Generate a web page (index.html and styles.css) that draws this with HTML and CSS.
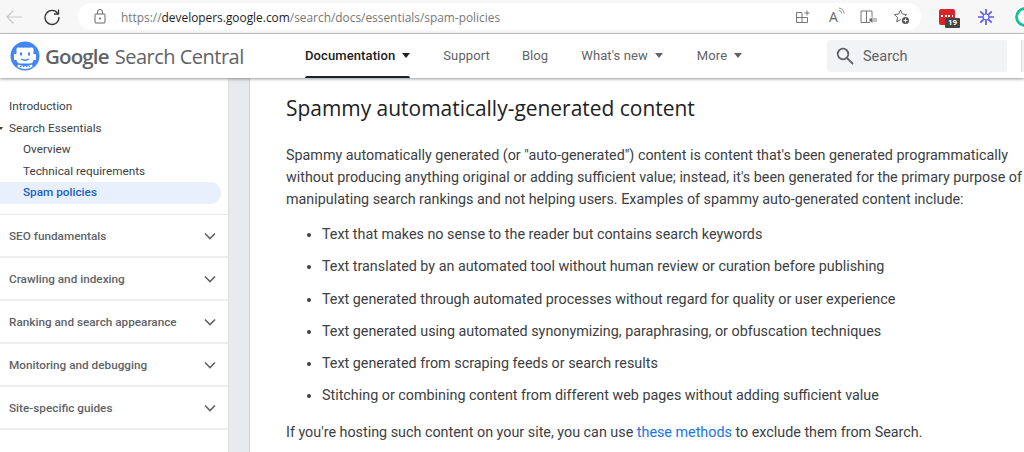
FILE: index.html
```html
<!DOCTYPE html>
<html lang="en">
<head>
<meta charset="utf-8">
<title>Spam policies</title>
<link rel="stylesheet" href="styles.css">
</head>
<body>
<div class="chrome">
  <svg class="back" width="18" height="16" viewBox="0 0 18 16"><path d="M17 8H2M8.500 1.500 2 8l6.500 6.500" fill="none" stroke="#c9c9c9" stroke-width="1.200"/></svg>
  <svg class="reload" width="18" height="18" viewBox="0 0 18 18"><path d="M14.800 5.500A7 7 0 1 0 16 9" fill="none" stroke="#333" stroke-width="1.300"/><path d="M15.500 1.500v4.500H11" fill="none" stroke="#333" stroke-width="1.300"/></svg>
  <div class="omni">
    <svg class="lock" width="12" height="15" viewBox="0 0 12 15"><rect x="1" y="5" width="10" height="9" rx="1" fill="none" stroke="#666"/><path d="M3.500 5V3a2.500 2.500 0 0 1 5 0v2" fill="none" stroke="#666"/><circle cx="6" cy="9.500" r="1" fill="#666"/></svg>
    <div class="url"><span class="dim">https://</span>developers.google.com<span class="dim">/search/docs/essentials/spam-policies</span></div>
    <div class="omni-icons">
      <svg class="oi-grid" width="15" height="14" viewBox="0 0 15 14"><path d="M7 2.500H1.500v10h11V7.500H1.500M7 2.500v10M9.500 3h5M12 .5v5" fill="none" stroke="#777"/></svg>
      <span class="aa">A<svg width="7" height="9" viewBox="0 0 7 9"><path d="M1 1a5.500 5.500 0 0 1 5 5.500M1 3.500A3 3 0 0 1 3.800 6.500" fill="none" stroke="#777" stroke-width=".8"/></svg></span>
      <svg class="oi-book" width="17" height="14" viewBox="0 0 17 14"><path d="M10 12.500H1V1h11v6M6.500 1v11.500" fill="none" stroke="#777"/><path d="M9.500 8.500h1.500l1.500-1.500v6l-1.500-1.500H9.500z" fill="#666"/><path d="M14 8v4M16 8v4" stroke="#777" stroke-width=".9"/></svg>
      <svg class="oi-star" width="16" height="16" viewBox="0 0 16 16"><path d="M6.500 1 8.300 5l4.400.5-3.300 3 .9 4.300-3.800-2.200-3.800 2.200.9-4.300-3.300-3L4.700 5z" fill="none" stroke="#666"/><circle cx="11.500" cy="11.500" r="4.500" fill="#fff"/><circle cx="11.500" cy="11.500" r="3.600" fill="#555"/><path d="M9.500 11.500h4M11.500 9.500v4" stroke="#fff"/></svg>
    </div>
  </div>
  <div class="ext ext-red"><span class="ext-dots"></span><span class="ext-badge">19</span></div>
  <svg class="ext-star" width="16" height="16" viewBox="0 0 16 16"><g stroke="#5b5bf0" stroke-width="1.700"><path d="M8 0v16M0 8h16M2.300 2.300l11.400 11.400M13.700 2.300 2.300 13.700"/></g><circle cx="8" cy="8" r="3" fill="#fff" stroke="#5b5bf0" stroke-width="1.200"/></svg>
  <div class="ext-round"></div>
</div>

<header class="topnav">
  <div class="brand">
    <svg width="30" height="30" viewBox="0 0 30 30">
      <circle cx="15" cy="15" r="14.500" fill="#4285f4"/>
      <path d="M8 6.500h14a1.500 1.500 0 0 1 1.500 1.500v5H26v6h-2.500a4 4 0 0 1-4 3.500h-9a4 4 0 0 1-4-3.500H4v-6h2.500V8A1.500 1.500 0 0 1 8 6.500z" fill="#fff"/>
      <path d="M9.500 6h11" stroke="#4285f4" stroke-width="1.200" stroke-dasharray="1.500 1.500"/>
      <path d="M10 11.500h2v3h-2zM18 11.500h2v3h-2z" fill="#4285f4"/>
      <path d="M11 18q4 2.500 8 0" fill="none" stroke="#4285f4" stroke-width="1.300"/>
      <path d="M8 23.500q7 3 14 0l.5 2.500q-7.500 4-15 0z" fill="#fff"/>
      <path d="M10 25.500h10" stroke="#4285f4" stroke-width="1.200" stroke-dasharray="1.500 1.500"/>
    </svg>
    <span class="brand-g">Google</span><span class="brand-s">Search Central</span>
  </div>
  <nav class="tabs">
    <a class="tab tab-active">Documentation<i class="caret caret-dark"></i></a>
    <a class="tab">Support</a>
    <a class="tab tab-blog">Blog</a>
    <a class="tab tab-new">What's new<i class="caret"></i></a>
    <a class="tab">More<i class="caret"></i></a>
  </nav>
  <div class="search">
    <svg width="18" height="18" viewBox="0 0 18 18"><circle cx="7" cy="7" r="5.300" fill="none" stroke="#5f6368" stroke-width="1.800"/><path d="m11 11 6 6" stroke="#5f6368" stroke-width="1.800"/></svg>
    <span>Search</span>
  </div>
  <div class="edge"></div>
</header>

<div class="page">
  <aside class="side">
    <ul class="tree">
      <li class="lvl1">Introduction</li>
      <li class="lvl1 open">Search Essentials</li>
      <li class="lvl2">Overview</li>
      <li class="lvl2">Technical requirements</li>
      <li class="lvl2 current">Spam policies</li>
    </ul>
    <div class="group">SEO fundamentals<svg class="chev" width="12" height="8" viewBox="0 0 12 8"><path d="m1 1.500 5 5 5-5" fill="none" stroke="#5f6368" stroke-width="1.600"/></svg></div>
    <div class="group">Crawling and indexing<svg class="chev" width="12" height="8" viewBox="0 0 12 8"><path d="m1 1.500 5 5 5-5" fill="none" stroke="#5f6368" stroke-width="1.600"/></svg></div>
    <div class="group">Ranking and search appearance<svg class="chev" width="12" height="8" viewBox="0 0 12 8"><path d="m1 1.500 5 5 5-5" fill="none" stroke="#5f6368" stroke-width="1.600"/></svg></div>
    <div class="group">Monitoring and debugging<svg class="chev" width="12" height="8" viewBox="0 0 12 8"><path d="m1 1.500 5 5 5-5" fill="none" stroke="#5f6368" stroke-width="1.600"/></svg></div>
    <div class="group">Site-specific guides<svg class="chev" width="12" height="8" viewBox="0 0 12 8"><path d="m1 1.500 5 5 5-5" fill="none" stroke="#5f6368" stroke-width="1.600"/></svg></div>
  </aside>
  <div class="gutter"></div>
  <main class="content">
    <h2>Spammy automatically-generated content</h2>
    <p class="lead">Spammy automatically generated (or "auto-generated") content is content that's been generated programmatically<br>without producing anything original or adding sufficient value; instead, it's been generated for the primary purpose of<br>manipulating search rankings and not helping users. Examples of spammy auto-generated content include:</p>
    <ul class="bullets">
      <li>Text that makes no sense to the reader but contains search keywords</li>
      <li>Text translated by an automated tool without human review or curation before publishing</li>
      <li>Text generated through automated processes without regard for quality or user experience</li>
      <li>Text generated using automated synonymizing, paraphrasing, or obfuscation techniques</li>
      <li>Text generated from scraping feeds or search results</li>
      <li>Stitching or combining content from different web pages without adding sufficient value</li>
    </ul>
    <p class="foot">If you're hosting such content on your site, you can use <a>these methods</a> to exclude them from Search.</p>
  </main>
</div>
</body>
</html>
```
FILE: styles.css
```css
* { box-sizing: border-box; }
html, body { margin: 0; padding: 0; }
body {
  width: 1024px;
  height: 452px;
  overflow: hidden;
  background: #fff;
  font-family: Roboto, "Liberation Sans", sans-serif;
  color: #3c4043;
}

/* Browser bar */
.chrome {
  height: 34px;
  background: #f7f7f7;
  border-bottom: 1px solid #c8c8c8;
  display: flex;
  align-items: center;
  padding-left: 5px;
}
.back { margin-right: 20px; flex: none; }
.reload { margin-right: 17px; flex: none; }
.omni {
  width: 843px;
  height: 27px;
  flex: none;
  background: #fff;
  border-radius: 14px;
  display: flex;
  align-items: center;
  padding-left: 16px;
}
.lock { margin-right: 15px; }
.url {
  font-family: "Open Sans", sans-serif;
  font-size: 11.900px;
  color: #222;
  white-space: nowrap;
}
.dim { color: #777; }
.omni-icons {
  margin-left: auto;
  display: flex;
  align-items: center;
  padding-right: 11px;
}
.oi-grid { margin-right: 19px; }
.oi-book { margin-right: 17px; }
.aa {
  font-family: "Open Sans", sans-serif;
  font-size: 14px;
  color: #666;
  display: flex;
  align-items: flex-start;
  width: 31px;
}
.ext { position: relative; flex: none; }
.ext-red {
  width: 16px;
  height: 16px;
  margin-left: 18px;
  background: #d9252a;
  border-radius: 2px;
}
.ext-dots {
  position: absolute;
  left: 2px;
  top: 6px;
  width: 12px;
  height: 2px;
  background: repeating-linear-gradient(90deg, #fff 0 2px, transparent 2px 3.500px);
}
.ext-badge {
  position: absolute;
  left: 6px;
  top: 9px;
  width: 15px;
  height: 10px;
  background: #444;
  color: #fff;
  font-size: 8px;
  line-height: 10px;
  text-align: center;
  border-radius: 1px;
  font-weight: 700;
}
.ext-star { margin-left: 23px; flex: none; }
.ext-round {
  margin-left: 21px;
  width: 20px;
  height: 20px;
  border-radius: 50%;
  background: #fff;
  border: 3px solid #15c39a;
  outline: 2px solid #fff;
  flex: none;
  box-shadow: 0 0 3px #999;
}

/* Site header */
.topnav {
  height: 44px;
  background: #fff;
  display: flex;
  align-items: center;
  box-shadow: 0 1px 3px rgba(60, 64, 67, .55);
  position: relative;
  z-index: 2;
  padding-left: 10px;
}
.brand {
  display: flex;
  align-items: center;
  width: 295px;
  flex: none;
  color: #5f6368;
  white-space: nowrap;
}
.brand-g {
  font-family: "Open Sans", sans-serif;
  font-weight: 600;
  font-size: 20.500px;
  margin-left: 5px;
  letter-spacing: -.85px;
}
.brand-s {
  font-family: "Open Sans", sans-serif;
  font-size: 20px;
  margin-left: 6px;
  letter-spacing: -.5px;
}
.tabs {
  display: flex;
  height: 44px;
}
.tab {
  font-size: 13px;
  color: #5f6368;
  letter-spacing: .1px;
  display: flex;
  align-items: center;
  white-space: nowrap;
  margin-right: 32px;
  padding-bottom: 2px;
}
.tab-active {
  color: #202124;
  position: relative;
  font-weight: 500;
  margin-right: 33px;
}
.tab-blog { margin-right: 33px; }
.tab-new { margin-right: 34px; }
.tab-active::after {
  content: "";
  position: absolute;
  left: 0;
  right: 0;
  bottom: 0;
  height: 2.500px;
  background: #202124;
  border-radius: 2px 2px 0 0;
}
.caret {
  width: 0;
  height: 0;
  margin-left: 7px;
  border-left: 4.500px solid transparent;
  border-right: 4.500px solid transparent;
  border-top: 5px solid #5f6368;
}
.caret-dark { border-top-color: #202124; }
.search {
  position: absolute;
  left: 827px;
  top: 6px;
  width: 180px;
  height: 32px;
  background: #f1f3f4;
  border-radius: 3px;
  display: flex;
  align-items: center;
  padding-left: 9px;
  gap: 9px;
  font-size: 14.500px;
  color: #5f6368;
}
.edge {
  position: absolute;
  left: 1021px;
  top: 6px;
  width: 3px;
  height: 32px;
  background: #f1f3f4;
  border-left: 1px solid #dadce0;
}

/* Body */
.page {
  display: flex;
  height: 374px;
}
.side {
  width: 229px;
  flex: none;
  background: #fff;
  border-right: 1px solid #dadce0;
  padding-top: 18px;
  font-size: 11.750px;
}
.tree {
  list-style: none;
  margin: 0;
  padding: 0 7px 0 0;
  border-bottom: 1px solid #e8eaed;
  height: 119px;
}
.tree li {
  height: 21.500px;
  line-height: 21.500px;
  white-space: nowrap;
}
.lvl1 { padding-left: 9px; position: relative; }
.lvl2 { padding-left: 23px; }
.open::before {
  content: "";
  position: absolute;
  left: -1px;
  top: 9px;
  border-left: 2.500px solid transparent;
  border-right: 2.500px solid transparent;
  border-top: 3px solid #3c4043;
}
.current {
  background: #e8f0fe;
  color: #1a5fc4;
  font-weight: 500;
  border-radius: 0 11px 11px 0;
}
.group {
  height: 43px;
  padding: 0 12px 0 9px;
  border-bottom: 2px solid #eceef0;
  display: flex;
  align-items: center;
  justify-content: space-between;
  font-weight: 500;
  color: #5f6368;
  white-space: nowrap;
}
.gutter {
  width: 21px;
  flex: none;
  background: #e8eaed;
  border-right: 1px solid #d0d2d5;
}
.content {
  flex: 1;
  min-width: 0;
  padding-left: 36px;
  white-space: nowrap;
}
h2 {
  margin: 16px 0 0;
  font-family: "Open Sans", Roboto, sans-serif;
  font-weight: 400;
  font-size: 20.950px;
  line-height: 28px;
  color: #202124;
}
.lead {
  margin: 22px 0 0;
  font-size: 14.330px;
  line-height: 22px;
}
.bullets {
  margin: 13px 0 0;
  padding-left: 36px;
  font-size: 14.330px;
}
.bullets li {
  height: 32.300px;
  line-height: 22px;
}
.foot {
  margin: 4px 0 0;
  font-size: 14.330px;
  line-height: 22px;
}
.foot a { color: #1a73e8; }
```
